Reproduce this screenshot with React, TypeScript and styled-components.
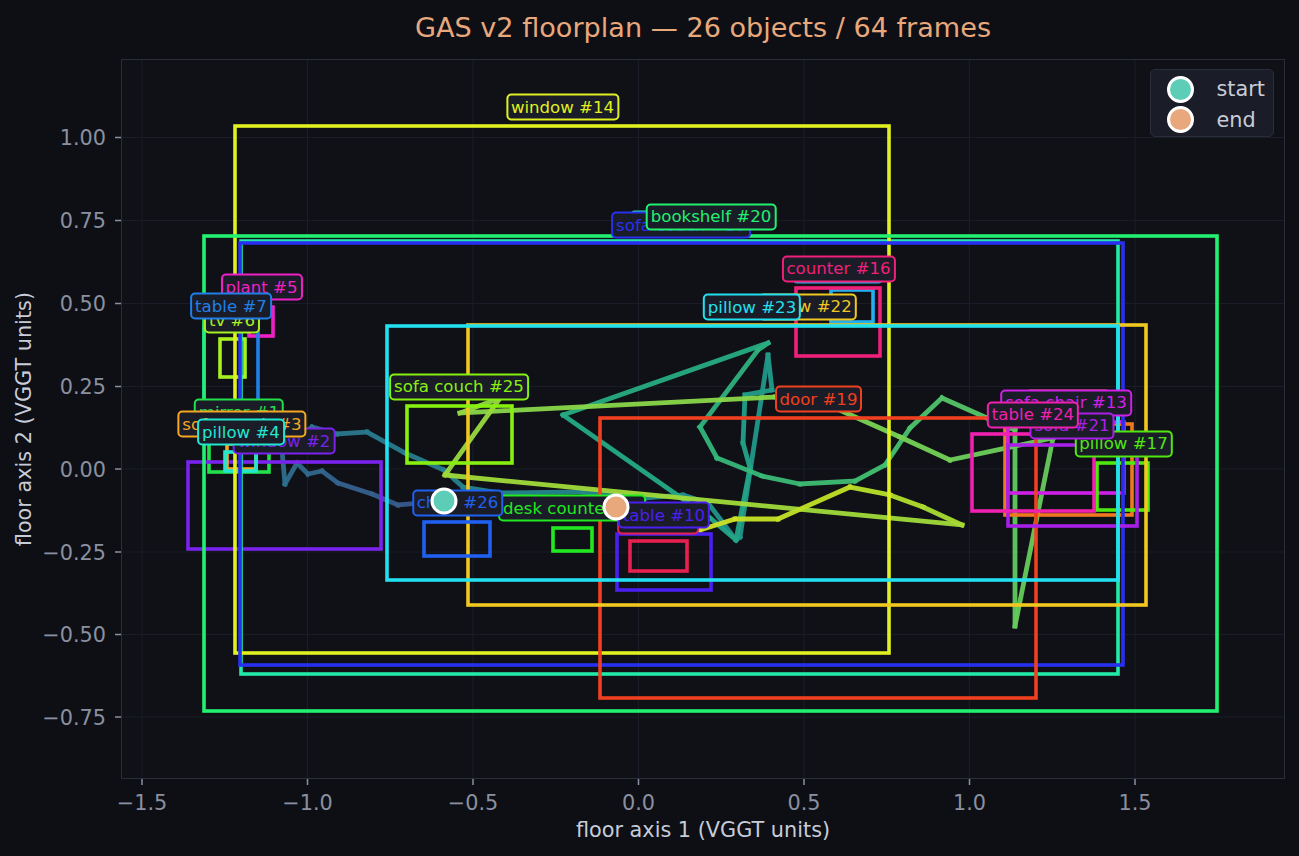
import React from "react";
import styled, { createGlobalStyle } from "styled-components";

// everything below is in page pixels, the svg viewBox starts at the plot corner
const PLOT = { x: 122, y: 60, w: 1162, h: 718 };

const xTicks = [
  { x: 142, label: "−1.5" },
  { x: 307.5, label: "−1.0" },
  { x: 473, label: "−0.5" },
  { x: 638.5, label: "0.0" },
  { x: 804, label: "0.5" },
  { x: 969.5, label: "1.0" },
  { x: 1135, label: "1.5" },
];

const yTicks = [
  { y: 137.5, label: "1.00" },
  { y: 220.5, label: "0.75" },
  { y: 303.5, label: "0.50" },
  { y: 386.5, label: "0.25" },
  { y: 469, label: "0.00" },
  { y: 552, label: "−0.25" },
  { y: 634.5, label: "−0.50" },
  { y: 717, label: "−0.75" },
];

const objects = [
  { name: "mirror #1", color: "#22e04a", box: [209, 432, 269, 472], tag: [239, 412] },
  { name: "window #2", color: "#7a22ee", box: [188, 462, 381, 549], tag: [284, 441] },
  { name: "sofa couch #3", color: "#f5a623", box: [227, 444, 256, 469], tag: [242, 424] },
  { name: "pillow #4", color: "#22e6d0", box: [225, 452, 256, 471], tag: [241, 432] },
  { name: "plant #5", color: "#f020c8", box: [249, 307, 273, 336], tag: [261.5, 287] },
  { name: "tv #6", color: "#a8f020", box: [220, 339, 245, 377], tag: [232, 320] },
  { name: "table #7", color: "#2080e8", box: [204, 326, 258, 440], tag: [231, 306] },
  { name: "desk counter #8", color: "#22e822", box: [553, 528, 592, 551], tag: [572, 508] },
  { name: "table #9", color: "#e82050", box: [630, 541, 687, 571], tag: [658, 521] },
  { name: "table #10", color: "#4a20f0", box: [617, 534, 711, 590], tag: [664, 515] },
  { name: "pillow #11", color: "#22e8a8", box: [241, 241, 1118, 674], tag: [679, 224] },
  { name: "sofa #12", color: "#f07820", box: [1005, 424, 1132, 515], tag: [1068, 403] },
  { name: "sofa chair #13", color: "#d020e8", box: [1008, 422, 1124, 493], tag: [1066, 402.5] },
  { name: "window #14", color: "#e0f020", box: [235, 126, 889, 653], tag: [562.5, 107] },
  { name: "table #15", color: "#22b0f0", box: [831, 290, 873, 322], tag: [838, 270] },
  { name: "counter #16", color: "#f0207a", box: [796, 288, 880, 356], tag: [838.5, 268.5] },
  { name: "pillow #17", color: "#50e810", box: [1097, 463, 1148, 510], tag: [1123.5, 443.5] },
  { name: "sofa couch #18", color: "#2830f0", box: [240, 243, 1123, 665], tag: [681, 225] },
  { name: "door #19", color: "#f04020", box: [600, 418, 1036, 698], tag: [818.5, 399] },
  { name: "bookshelf #20", color: "#22f070", box: [204, 236, 1217, 711], tag: [711, 216.5] },
  { name: "sofa #21", color: "#a820e8", box: [1008, 445, 1137, 526], tag: [1072, 425.5] },
  { name: "pillow #22", color: "#f0c820", box: [468, 325, 1146, 605], tag: [807.5, 306.5] },
  { name: "pillow #23", color: "#22e0f0", box: [387, 326, 1118, 580], tag: [752, 307] },
  { name: "table #24", color: "#f020b0", box: [972, 434, 1094, 511], tag: [1033, 414.5] },
  { name: "sofa couch #25", color: "#88f010", box: [407, 406, 512, 463], tag: [459, 386.5] },
  { name: "chair #26", color: "#2060f0", box: [424, 522, 490, 556], tag: [457.5, 502.5] },
];

const track = [
  [444, 501], [398, 505], [372, 494], [338, 483], [322, 471], [308, 474], [297, 463], [285, 484],
  [282, 450], [312, 427], [337, 434], [367, 432], [405, 453], [444, 470], [463, 487], [500, 493],
  [583, 492], [645, 498], [683, 495], [708, 503], [736, 540], [740, 537], [768, 355], [772, 390],
  [745, 395], [743, 443], [750, 468], [736, 540], [710, 518], [563, 415], [768, 343], [758, 350],
  [700, 427], [717, 458], [762, 476], [800, 484], [855, 481], [885, 465], [910, 428], [942, 398],
  [987, 418], [1015, 430], [1015, 626], [1053, 438], [950, 460], [900, 437], [835, 408], [775, 397],
  [460, 413], [500, 398], [445, 475], [962, 525], [923, 507], [890, 495], [850, 487], [778, 519],
  [735, 519], [700, 530], [616, 507],
];

const viridis = [
  [65, 68, 135], [53, 95, 141], [42, 120, 142], [33, 145, 140], [34, 168, 132],
  [68, 191, 112], [122, 209, 81], [189, 223, 38], [253, 231, 37],
];

// t in 0..1 maps onto the 0.2..1.0 end of the viridis ramp
const rampColor = (t: number) => {
  const pos = t * (viridis.length - 1);
  const i = Math.min(Math.floor(pos), viridis.length - 2);
  const f = pos - i;
  const mix = viridis[i].map((c, k) => Math.round(c + (viridis[i + 1][k] - c) * f));
  return `rgb(${mix.join(",")})`;
};

const GlobalStyle = createGlobalStyle`
  html, body {
    margin: 0;
    background: #0d0f14;
  }
  body {
    font-family: "DejaVu Sans", "Liberation Sans", sans-serif;
  }
`;

const Figure = styled.div`
  width: 1299px;
  height: 856px;
  display: grid;
  grid-template-columns: 122px 1162px;
  grid-template-rows: 60px 718px 1fr;
  overflow: hidden;
`;

const Title = styled.h1`
  grid-column: 2;
  margin: 0;
  padding-bottom: 6px;
  box-sizing: border-box;
  display: flex;
  align-items: center;
  justify-content: center;
  font-size: 27.1px;
  font-weight: 400;
  color: #e8a87c;
  white-space: nowrap;
`;

const YAxisLabel = styled.div`
  grid-column: 1;
  grid-row: 2;
  display: flex;
  align-items: center;
  justify-content: flex-start;
  padding-left: 13px;
  box-sizing: border-box;
  span {
    writing-mode: vertical-rl;
    transform: rotate(180deg);
    font-size: 20.8px;
    line-height: 22px;
    color: #c8ccd8;
    white-space: nowrap;
  }
`;

const XAxisLabel = styled.div`
  grid-column: 2;
  grid-row: 3;
  text-align: center;
  padding-top: 40px;
  font-size: 20.8px;
  line-height: 24px;
  color: #c8ccd8;
`;

const Plot = styled.div`
  grid-column: 2;
  grid-row: 2;
  position: relative;
  background: #0f1117;
  outline: 1.6px solid #2a2d3a;
  outline-offset: -0.8px;
`;

const Canvas = styled.svg`
  display: block;
  width: 100%;
  height: 100%;
  overflow: visible;
`;

const TickLabel = styled.text`
  font-family: "DejaVu Sans", sans-serif;
  font-size: 20.8px;
  fill: #8b90a0;
`;

const Tag = styled.div<{ $color: string }>`
  position: absolute;
  transform: translate(-50%, -50%);
  padding: 2.5px 3px;
  background: #1a1d27;
  border: 2px solid ${(p) => p.$color};
  border-radius: 5px;
  font-size: 16.6px;
  line-height: 18px;
  color: ${(p) => p.$color};
  white-space: nowrap;
`;

const Dot = styled.span<{ $color: string }>`
  display: block;
  width: 27px;
  height: 27px;
  box-sizing: border-box;
  border: 3px solid #fff;
  border-radius: 50%;
  background: ${(p) => p.$color};
`;

const PlotDot = styled(Dot)`
  position: absolute;
  transform: translate(-50%, -50%);
`;

const Legend = styled.div`
  position: absolute;
  top: 9px;
  right: 10px;
  width: 124px;
  height: 68px;
  box-sizing: border-box;
  padding: 4px 9px 0 15.5px;
  display: grid;
  grid-template-columns: 27px 1fr;
  grid-auto-rows: 30.5px;
  column-gap: 23px;
  align-items: center;
  background: #1a1d27;
  border: 1.5px solid #2a2d3a;
  border-radius: 5px;
`;

const LegendText = styled.span`
  font-size: 20.8px;
  color: #c8ccd8;
`;

const App = () => {
  return (
    <Figure>
      <GlobalStyle />
      <Title>GAS v2 floorplan — 26 objects / 64 frames</Title>
      <YAxisLabel>
        <span>floor axis 2 (VGGT units)</span>
      </YAxisLabel>
      <Plot>
        <Canvas viewBox={`${PLOT.x} ${PLOT.y} ${PLOT.w} ${PLOT.h}`}>
          {xTicks.map((t) => (
            <g key={t.label}>
              <line x1={t.x} x2={t.x} y1={PLOT.y} y2={PLOT.y + PLOT.h} stroke="#1a1d27" strokeWidth={1.2} />
              <line x1={t.x} x2={t.x} y1={PLOT.y + PLOT.h + 1} y2={PLOT.y + PLOT.h + 7} stroke="#8b90a0" strokeWidth={1.5} />
              <TickLabel x={t.x} y={810} textAnchor="middle">
                {t.label}
              </TickLabel>
            </g>
          ))}
          {yTicks.map((t) => (
            <g key={t.label}>
              <line x1={PLOT.x} x2={PLOT.x + PLOT.w} y1={t.y} y2={t.y} stroke="#1a1d27" strokeWidth={1.2} />
              <line x1={PLOT.x - 7} x2={PLOT.x - 1} y1={t.y} y2={t.y} stroke="#8b90a0" strokeWidth={1.5} />
              <TickLabel x={106} y={t.y + 7.5} textAnchor="end">
                {t.label}
              </TickLabel>
            </g>
          ))}
          {track.slice(1).map((p, i) => (
            <line
              key={i}
              x1={track[i][0]}
              y1={track[i][1]}
              x2={p[0]}
              y2={p[1]}
              stroke={rampColor(0.1 + (0.82 * i) / (track.length - 2))}
              strokeOpacity={0.96}
              strokeWidth={4.8}
              strokeLinecap="square"
            />
          ))}
          {objects.map((o) => (
            <rect
              key={o.name}
              x={o.box[0]}
              y={o.box[1]}
              width={o.box[2] - o.box[0]}
              height={o.box[3] - o.box[1]}
              fill="none"
              stroke={o.color}
              strokeWidth={3.6}
            />
          ))}
        </Canvas>
        {objects.map((o) => (
          <Tag key={o.name} $color={o.color} style={{ left: o.tag[0] - PLOT.x, top: o.tag[1] - PLOT.y }}>
            {o.name}
          </Tag>
        ))}
        <PlotDot $color="#5ecdb8" style={{ left: 444 - PLOT.x, top: 501 - PLOT.y }} />
        <PlotDot $color="#e8a87c" style={{ left: 616 - PLOT.x, top: 507 - PLOT.y }} />
        <Legend>
          <Dot $color="#5ecdb8" />
          <LegendText>start</LegendText>
          <Dot $color="#e8a87c" />
          <LegendText>end</LegendText>
        </Legend>
      </Plot>
      <XAxisLabel>floor axis 1 (VGGT units)</XAxisLabel>
    </Figure>
  );
};

export default App;
